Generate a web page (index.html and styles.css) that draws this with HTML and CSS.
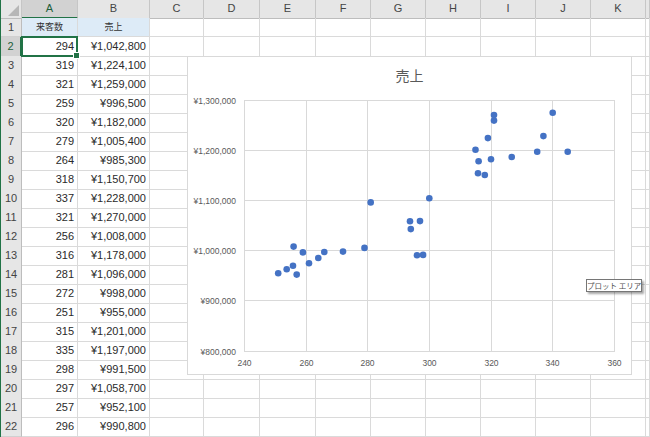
FILE: index.html
```html
<!DOCTYPE html>
<html lang="ja">
<head>
<meta charset="utf-8">
<link rel="stylesheet" href="styles.css">
</head>
<body>
<div class="sheet">
  <div class="row head">
    <div class="corner"></div>
    <div class="ch active">A</div><div class="ch">B</div><div class="ch">C</div><div class="ch">D</div><div class="ch">E</div><div class="ch">F</div><div class="ch">G</div><div class="ch">H</div><div class="ch">I</div><div class="ch">J</div><div class="ch">K</div><div class="ch"></div>
  </div>
  <div class="row"><div class="rh">1</div><div class="c hdr">来客数</div><div class="c hdr">売上</div><div class="c"></div><div class="c"></div><div class="c"></div><div class="c"></div><div class="c"></div><div class="c"></div><div class="c"></div><div class="c"></div><div class="c"></div><div class="c"></div></div>
  <div class="row"><div class="rh active">2</div><div class="c num sel">294</div><div class="c num">¥1,042,800</div><div class="c"></div><div class="c"></div><div class="c"></div><div class="c"></div><div class="c"></div><div class="c"></div><div class="c"></div><div class="c"></div><div class="c"></div><div class="c"></div></div>
  <div class="row"><div class="rh">3</div><div class="c num">319</div><div class="c num">¥1,224,100</div><div class="c"></div><div class="c"></div><div class="c"></div><div class="c"></div><div class="c"></div><div class="c"></div><div class="c"></div><div class="c"></div><div class="c"></div><div class="c"></div></div>
  <div class="row"><div class="rh">4</div><div class="c num">321</div><div class="c num">¥1,259,000</div><div class="c"></div><div class="c"></div><div class="c"></div><div class="c"></div><div class="c"></div><div class="c"></div><div class="c"></div><div class="c"></div><div class="c"></div><div class="c"></div></div>
  <div class="row"><div class="rh">5</div><div class="c num">259</div><div class="c num">¥996,500</div><div class="c"></div><div class="c"></div><div class="c"></div><div class="c"></div><div class="c"></div><div class="c"></div><div class="c"></div><div class="c"></div><div class="c"></div><div class="c"></div></div>
  <div class="row"><div class="rh">6</div><div class="c num">320</div><div class="c num">¥1,182,000</div><div class="c"></div><div class="c"></div><div class="c"></div><div class="c"></div><div class="c"></div><div class="c"></div><div class="c"></div><div class="c"></div><div class="c"></div><div class="c"></div></div>
  <div class="row"><div class="rh">7</div><div class="c num">279</div><div class="c num">¥1,005,400</div><div class="c"></div><div class="c"></div><div class="c"></div><div class="c"></div><div class="c"></div><div class="c"></div><div class="c"></div><div class="c"></div><div class="c"></div><div class="c"></div></div>
  <div class="row"><div class="rh">8</div><div class="c num">264</div><div class="c num">¥985,300</div><div class="c"></div><div class="c"></div><div class="c"></div><div class="c"></div><div class="c"></div><div class="c"></div><div class="c"></div><div class="c"></div><div class="c"></div><div class="c"></div></div>
  <div class="row"><div class="rh">9</div><div class="c num">318</div><div class="c num">¥1,150,700</div><div class="c"></div><div class="c"></div><div class="c"></div><div class="c"></div><div class="c"></div><div class="c"></div><div class="c"></div><div class="c"></div><div class="c"></div><div class="c"></div></div>
  <div class="row"><div class="rh">10</div><div class="c num">337</div><div class="c num">¥1,228,000</div><div class="c"></div><div class="c"></div><div class="c"></div><div class="c"></div><div class="c"></div><div class="c"></div><div class="c"></div><div class="c"></div><div class="c"></div><div class="c"></div></div>
  <div class="row"><div class="rh">11</div><div class="c num">321</div><div class="c num">¥1,270,000</div><div class="c"></div><div class="c"></div><div class="c"></div><div class="c"></div><div class="c"></div><div class="c"></div><div class="c"></div><div class="c"></div><div class="c"></div><div class="c"></div></div>
  <div class="row"><div class="rh">12</div><div class="c num">256</div><div class="c num">¥1,008,000</div><div class="c"></div><div class="c"></div><div class="c"></div><div class="c"></div><div class="c"></div><div class="c"></div><div class="c"></div><div class="c"></div><div class="c"></div><div class="c"></div></div>
  <div class="row"><div class="rh">13</div><div class="c num">316</div><div class="c num">¥1,178,000</div><div class="c"></div><div class="c"></div><div class="c"></div><div class="c"></div><div class="c"></div><div class="c"></div><div class="c"></div><div class="c"></div><div class="c"></div><div class="c"></div></div>
  <div class="row"><div class="rh">14</div><div class="c num">281</div><div class="c num">¥1,096,000</div><div class="c"></div><div class="c"></div><div class="c"></div><div class="c"></div><div class="c"></div><div class="c"></div><div class="c"></div><div class="c"></div><div class="c"></div><div class="c"></div></div>
  <div class="row"><div class="rh">15</div><div class="c num">272</div><div class="c num">¥998,000</div><div class="c"></div><div class="c"></div><div class="c"></div><div class="c"></div><div class="c"></div><div class="c"></div><div class="c"></div><div class="c"></div><div class="c"></div><div class="c"></div></div>
  <div class="row"><div class="rh">16</div><div class="c num">251</div><div class="c num">¥955,000</div><div class="c"></div><div class="c"></div><div class="c"></div><div class="c"></div><div class="c"></div><div class="c"></div><div class="c"></div><div class="c"></div><div class="c"></div><div class="c"></div></div>
  <div class="row"><div class="rh">17</div><div class="c num">315</div><div class="c num">¥1,201,000</div><div class="c"></div><div class="c"></div><div class="c"></div><div class="c"></div><div class="c"></div><div class="c"></div><div class="c"></div><div class="c"></div><div class="c"></div><div class="c"></div></div>
  <div class="row"><div class="rh">18</div><div class="c num">335</div><div class="c num">¥1,197,000</div><div class="c"></div><div class="c"></div><div class="c"></div><div class="c"></div><div class="c"></div><div class="c"></div><div class="c"></div><div class="c"></div><div class="c"></div><div class="c"></div></div>
  <div class="row"><div class="rh">19</div><div class="c num">298</div><div class="c num">¥991,500</div><div class="c"></div><div class="c"></div><div class="c"></div><div class="c"></div><div class="c"></div><div class="c"></div><div class="c"></div><div class="c"></div><div class="c"></div><div class="c"></div></div>
  <div class="row"><div class="rh">20</div><div class="c num">297</div><div class="c num">¥1,058,700</div><div class="c"></div><div class="c"></div><div class="c"></div><div class="c"></div><div class="c"></div><div class="c"></div><div class="c"></div><div class="c"></div><div class="c"></div><div class="c"></div></div>
  <div class="row"><div class="rh">21</div><div class="c num">257</div><div class="c num">¥952,100</div><div class="c"></div><div class="c"></div><div class="c"></div><div class="c"></div><div class="c"></div><div class="c"></div><div class="c"></div><div class="c"></div><div class="c"></div><div class="c"></div></div>
  <div class="row"><div class="rh">22</div><div class="c num">296</div><div class="c num">¥990,800</div><div class="c"></div><div class="c"></div><div class="c"></div><div class="c"></div><div class="c"></div><div class="c"></div><div class="c"></div><div class="c"></div><div class="c"></div><div class="c"></div></div>

  <div class="chart">
    <svg class="chart-svg" width="445" height="319" viewBox="0 0 445 319">
      <rect x="0.5" y="0.5" width="444" height="318" fill="#fff" stroke="#d9d9d9"/>
      <text class="title" x="222.5" y="25" text-anchor="middle">売上</text>
      <g stroke="#d9d9d9" stroke-width="1">
        <line x1="57" y1="44.5" x2="428" y2="44.5"/>
        <line x1="57" y1="94.5" x2="428" y2="94.5"/>
        <line x1="57" y1="144.5" x2="428" y2="144.5"/>
        <line x1="57" y1="194.5" x2="428" y2="194.5"/>
        <line x1="57" y1="244.5" x2="428" y2="244.5"/>
        <line x1="57" y1="295.5" x2="428" y2="295.5"/>
        <line x1="57.5" y1="44" x2="57.5" y2="296"/>
        <line x1="119.5" y1="44" x2="119.5" y2="296"/>
        <line x1="180.5" y1="44" x2="180.5" y2="296"/>
        <line x1="242.5" y1="44" x2="242.5" y2="296"/>
        <line x1="304.5" y1="44" x2="304.5" y2="296"/>
        <line x1="365.5" y1="44" x2="365.5" y2="296"/>
        <line x1="427.5" y1="44" x2="427.5" y2="296"/>
      </g>
      <g class="axis" text-anchor="end">
        <text x="49" y="47.5">¥1,300,000</text>
        <text x="49" y="97.5">¥1,200,000</text>
        <text x="49" y="147.5">¥1,100,000</text>
        <text x="49" y="197.5">¥1,000,000</text>
        <text x="49" y="247.5">¥900,000</text>
        <text x="49" y="298.5">¥800,000</text>
      </g>
      <g class="axis" text-anchor="middle">
        <text x="57.5" y="310">240</text>
        <text x="119.5" y="310">260</text>
        <text x="180.5" y="310">280</text>
        <text x="242.5" y="310">300</text>
        <text x="304.5" y="310">320</text>
        <text x="365.5" y="310">340</text>
        <text x="427.5" y="310">360</text>
      </g>
      <g fill="#4472c4">
        <circle cx="223.8" cy="173.1" r="3.3"/>
        <circle cx="300.9" cy="82.1" r="3.3"/>
        <circle cx="307" cy="64.6" r="3.3"/>
        <circle cx="115.9" cy="196.4" r="3.3"/>
        <circle cx="304" cy="103.2" r="3.3"/>
        <circle cx="177.5" cy="191.9" r="3.3"/>
        <circle cx="131.3" cy="202" r="3.3"/>
        <circle cx="297.8" cy="119" r="3.3"/>
        <circle cx="356.4" cy="80.1" r="3.3"/>
        <circle cx="307" cy="59" r="3.3"/>
        <circle cx="106.6" cy="190.6" r="3.3"/>
        <circle cx="291.6" cy="105.2" r="3.3"/>
        <circle cx="183.7" cy="146.4" r="3.3"/>
        <circle cx="156" cy="195.6" r="3.3"/>
        <circle cx="91.2" cy="217.2" r="3.3"/>
        <circle cx="288.5" cy="93.7" r="3.3"/>
        <circle cx="350.2" cy="95.7" r="3.3"/>
        <circle cx="236.1" cy="198.9" r="3.3"/>
        <circle cx="233" cy="165.1" r="3.3"/>
        <circle cx="109.7" cy="218.6" r="3.3"/>
        <circle cx="230" cy="199.2" r="3.3"/>
        <circle cx="365.7" cy="56.7" r="3.3"/>
        <circle cx="380.7" cy="95.7" r="3.3"/>
        <circle cx="324.7" cy="101" r="3.3"/>
        <circle cx="291" cy="117.3" r="3.3"/>
        <circle cx="242.3" cy="142.3" r="3.3"/>
        <circle cx="223" cy="165.3" r="3.3"/>
        <circle cx="99.7" cy="213.3" r="3.3"/>
        <circle cx="106" cy="209.7" r="3.3"/>
        <circle cx="122" cy="207.3" r="3.3"/>
        <circle cx="137.3" cy="196" r="3.3"/>
      </g>
    </svg>
  </div>
  <div class="tip">プロット エリア</div>
</div>
</body>
</html>
```
FILE: styles.css
```css
* { box-sizing: border-box; }
html, body { margin: 0; padding: 0; background: #fff; }
body {
  font-family: "Liberation Sans", Arial, "Noto Sans CJK JP", sans-serif;
  color: #222;
  overflow: hidden;
}
.sheet {
  position: relative;
  width: 650px;
  height: 437px;
  border-left: 1px solid #217346;
  overflow: hidden;
}
.row {
  display: grid;
  grid-template-columns: 21px 56px 72px 54px 56px 56px 55px 55px 55px 55px 55px 55px 1fr;
  height: 19px;
}
.row.head { height: 18px; }
.corner {
  position: relative;
  background: #e6e6e6;
  border-right: 1px solid #c6c6c6;
  border-bottom: 1px solid #bdbdbd;
}
.corner::after {
  content: "";
  position: absolute;
  right: 2px;
  bottom: 2px;
  border-style: solid;
  border-width: 0 0 11px 11px;
  border-color: transparent transparent #b7b7b7 transparent;
}
.ch {
  background: #e6e6e6;
  border-right: 1px solid #c6c6c6;
  border-bottom: 1px solid #bdbdbd;
  font-size: 11px;
  line-height: 17px;
  text-align: center;
  color: #444;
}
.ch.active {
  background: #d2d2d2;
  color: #1d5f3a;
  border-bottom: 2px solid #217346;
}
.rh {
  background: #e6e6e6;
  border-right: 1px solid #bdbdbd;
  border-bottom: 1px solid #d0d0d0;
  font-size: 11px;
  line-height: 18px;
  text-align: center;
  color: #444;
}
.rh.active {
  background: #d2d2d2;
  color: #1d5f3a;
  border-right: 2px solid #217346;
}
.c {
  border-right: 1px solid #dadada;
  border-bottom: 1px solid #dadada;
  font-size: 11px;
  line-height: 19px;
  white-space: nowrap;
  color: #2a2a2a;
}
.num { text-align: right; padding-right: 3px; }
.hdr {
  background: #ddebf7;
  text-align: center;
  font-family: "Noto Sans CJK JP", sans-serif;
  font-size: 9px;
  line-height: 18px;
  color: #333;
}
.sel { position: relative; }
.sel::before {
  content: "";
  position: absolute;
  left: -1px;
  top: -1px;
  right: -1px;
  bottom: -1px;
  border: 2px solid #217346;
}
.sel::after {
  content: "";
  position: absolute;
  right: -3px;
  bottom: -3px;
  width: 5px;
  height: 5px;
  background: #217346;
  border: 1px solid #fff;
}
.chart {
  position: absolute;
  left: 186px;
  top: 56px;
  width: 445px;
  height: 319px;
}
.chart-svg { display: block; }
.title {
  font-family: "Noto Sans CJK JP", sans-serif;
  font-size: 14px;
  fill: #595959;
}
.axis {
  font-family: "Liberation Sans", Arial, sans-serif;
  font-size: 8.5px;
  fill: #595959;
}
.tip {
  position: absolute;
  left: 585px;
  top: 279px;
  width: 56px;
  height: 13px;
  background: #fff;
  border: 1px solid #767676;
  box-shadow: 2px 2px 2px rgba(0, 0, 0, 0.35);
  font-family: "Noto Sans CJK JP", sans-serif;
  font-size: 7.5px;
  line-height: 11px;
  color: #505050;
  text-align: center;
  white-space: nowrap;
}
```
